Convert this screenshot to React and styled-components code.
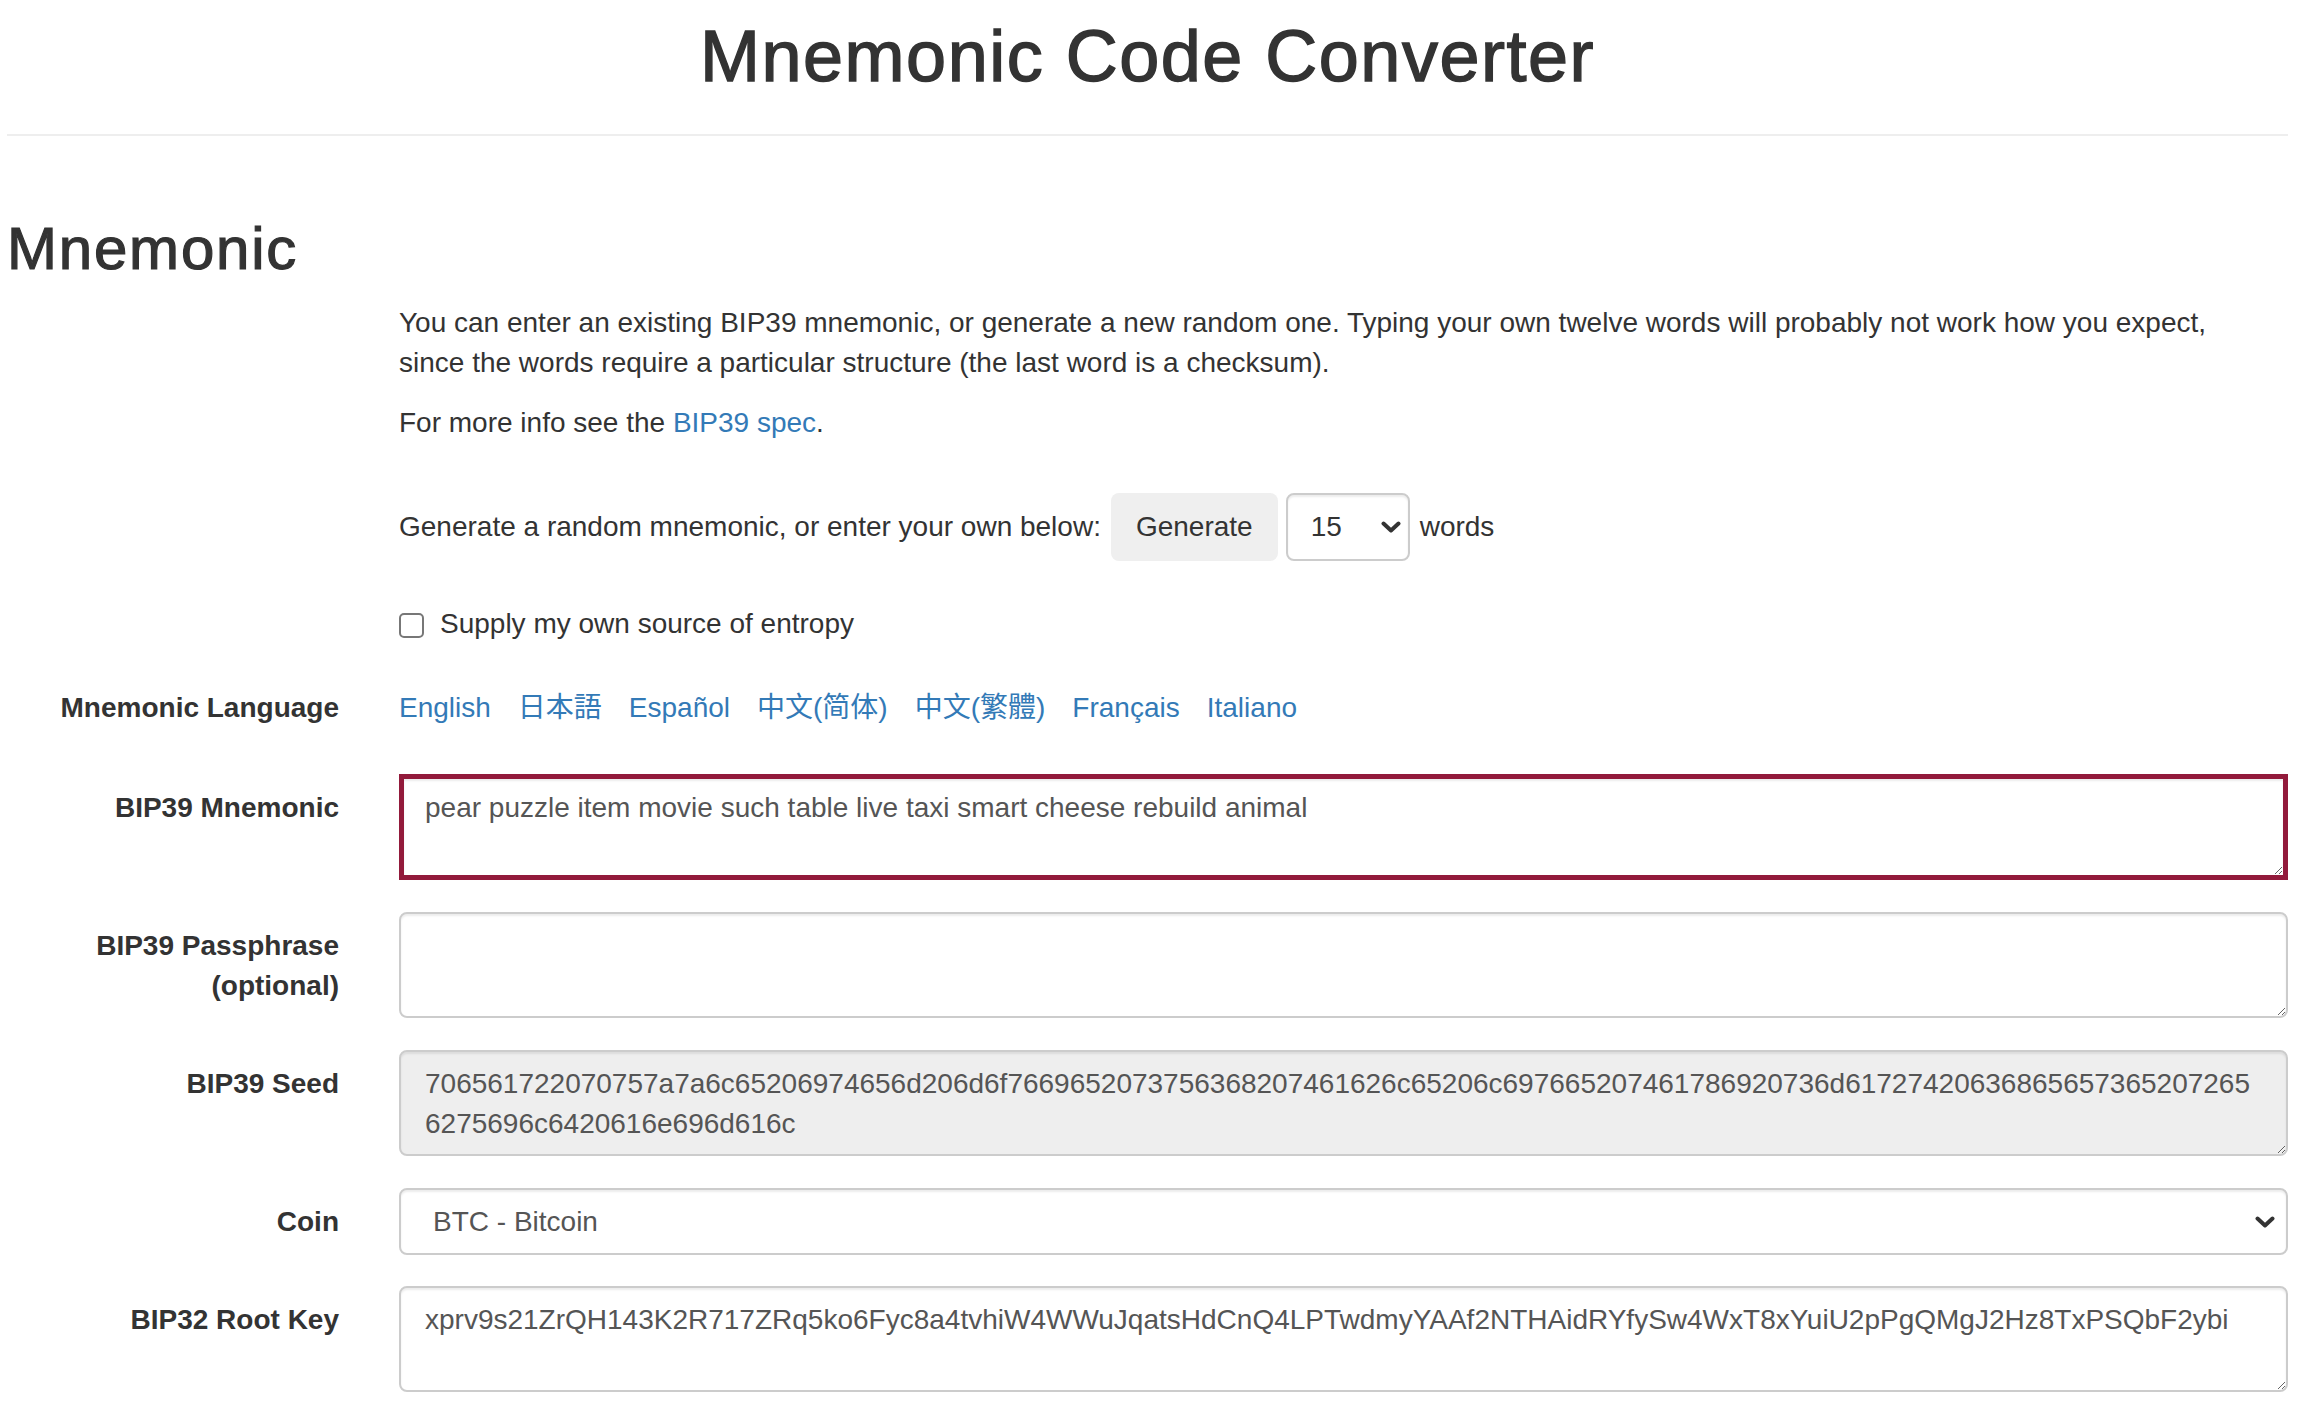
import React from 'react'
import styled, { createGlobalStyle } from 'styled-components'

const GlobalStyle = createGlobalStyle`
  * { box-sizing: border-box; }
  body {
    margin: 0;
    background: #fff;
    color: #333;
    font-family: "Liberation Sans", Helvetica, Arial, "Noto Sans CJK SC", sans-serif;
    font-size: 28px;
    line-height: 40px;
  }
`

const Page = styled.div`
  padding: 0 14px 0 8px;
`

const Header = styled.header`
  margin-left: -1px;
  padding: 17px 0 38px;
  border-bottom: 2px solid #eee;
`

const Title = styled.h1`
  margin: 0;
  text-align: center;
  font-size: 72px;
  line-height: 79px;
  font-weight: 400;
  letter-spacing: 1.5px;
  -webkit-text-stroke: 1.4px #333;
`

const SectionTitle = styled.h2`
  margin: 80px 0 21px -1px;
  font-size: 60px;
  line-height: 66px;
  font-weight: 400;
  letter-spacing: 1.8px;
  -webkit-text-stroke: 1.2px #333;
`

const Row = styled.div`
  display: grid;
  grid-template-columns: 331px 1fr;
  column-gap: 60px;
  margin-top: ${p => p.$top || 0}px;
  margin-bottom: ${p => (p.$bottom === undefined ? 32 : p.$bottom)}px;
`

const Label = styled.label`
  padding-top: 14px;
  text-align: right;
  font-weight: 700;
`

const Text = styled.p`
  margin: 0 0 20px;
  max-width: 1845px;
`

const Link = styled.a`
  color: #337ab7;
  text-decoration: none;
  font-family: "Liberation Sans", Helvetica, Arial, ${p => p.$cjk || '"Noto Sans CJK SC"'}, sans-serif;
`

const Inline = styled.div`
  display: flex;
  align-items: center;
  white-space: nowrap;
`

const Button = styled.button`
  height: 68px;
  margin-left: 10px;
  padding: 0 25px;
  border: none;
  border-radius: 8px;
  background: #efefef;
  color: #333;
  font: inherit;
`

const SelectWrap = styled.div`
  position: relative;
  margin-left: ${p => p.$left || 0}px;
  width: ${p => p.$width || '100%'};
`

const Select = styled.select`
  width: 100%;
  height: ${p => p.$height}px;
  padding: 0 0 0 ${p => p.$pad}px;
  border: 2px solid #ccc;
  border-radius: 8px;
  background: #fff;
  color: ${p => p.$color || '#555'};
  font: inherit;
  appearance: none;
  -webkit-appearance: none;
  box-shadow: inset 0 2px 2px rgba(0, 0, 0, 0.075);
`

const Chevron = styled.svg`
  position: absolute;
  top: 50%;
  right: ${p => p.$right}px;
  width: 20px;
  height: 12px;
  margin-top: -6px;
  pointer-events: none;
`

const Words = styled.span`
  margin-left: 10px;
`

const CheckRow = styled.label`
  display: flex;
  align-items: center;
`

const Check = styled.input`
  width: 25px;
  height: 25px;
  margin: 2px 16px 0 0;
  border: 2px solid #777;
  border-radius: 5px;
  background: #fff;
  appearance: none;
  -webkit-appearance: none;
`

const Languages = styled.div`
  display: flex;
  gap: 27px;
  padding-top: 14px;
`

const Area = styled.textarea`
  display: block;
  width: 100%;
  height: 106px;
  padding: ${p => (p.$invalid ? '9px 21px' : '12px 24px')};
  border: ${p => (p.$invalid ? '5px solid #921a3b' : '2px solid #ccc')};
  border-radius: ${p => (p.$invalid ? '0' : '8px')};
  background: ${p => (p.readOnly ? '#eee' : '#fff')};
  color: #555;
  font: inherit;
  resize: vertical;
  outline: none;
  box-shadow: inset 0 2px 2px rgba(0, 0, 0, 0.075);
`

function Arrow({ right }) {
  return (
    <Chevron $right={right} viewBox="0 0 20 12">
      <path d="M2.5 2.5 L10 9.5 L17.5 2.5" fill="none" stroke="#333" strokeWidth="4" strokeLinecap="round" strokeLinejoin="round" />
    </Chevron>
  )
}

const languages = [
  ['English'],
  ['日本語', '"Noto Sans CJK JP"'],
  ['Español'],
  ['中文(简体)', '"Noto Sans CJK SC"'],
  ['中文(繁體)', '"Noto Sans CJK TC"'],
  ['Français'],
  ['Italiano'],
]

const mnemonic = 'pear puzzle item movie such table live taxi smart cheese rebuild animal'
const seedHex = Array.from(mnemonic).map(c => c.charCodeAt(0).toString(16)).join('')
// the seed box breaks after 118 hex chars in the original
const seed = seedHex.slice(0, 118) + '\n' + seedHex.slice(118)
const rootKey = 'xprv9s21ZrQH143K2R717ZRq5ko6Fyc8a4tvhiW4WWuJqatsHdCnQ4LPTwdmyYAAf2NTHAidRYfySw4WxT8xYuiU2pPgQMgJ2Hz8TxPSQbF2ybi'

export default function App() {
  return (
    <>
      <GlobalStyle />
      <Page>
        <Header>
          <Title>Mnemonic Code Converter</Title>
        </Header>

        <SectionTitle>Mnemonic</SectionTitle>

        <Row $bottom={0}>
          <div />
          <div>
            <Text>
              You can enter an existing BIP39 mnemonic, or generate a new random one. Typing your own twelve words will probably not work how you expect, since the words require a particular structure (the last word is a checksum).
            </Text>
            <Text>
              For more info see the <Link href="#">BIP39 spec</Link>.
            </Text>
          </div>
        </Row>

        <Row $top={30} $bottom={43}>
          <div />
          <Inline>
            <span>Generate a random mnemonic, or enter your own below:</span>
            <Button type="button">Generate</Button>
            <SelectWrap $left={8} $width="124px">
              <Select $height={68} $pad={23} $color="#333" defaultValue="15">
                <option>3</option>
                <option>6</option>
                <option>9</option>
                <option>12</option>
                <option>15</option>
                <option>18</option>
                <option>21</option>
                <option>24</option>
              </Select>
              <Arrow right={9} />
            </SelectWrap>
            <Words>words</Words>
          </Inline>
        </Row>

        <Row $bottom={30}>
          <div />
          <CheckRow>
            <Check type="checkbox" />
            Supply my own source of entropy
          </CheckRow>
        </Row>

        <Row $bottom={46}>
          <Label>Mnemonic Language</Label>
          <Languages>
            {languages.map(([name, cjk]) => (
              <Link key={name} href="#" $cjk={cjk}>{name}</Link>
            ))}
          </Languages>
        </Row>

        <Row>
          <Label>BIP39 Mnemonic</Label>
          <Area $invalid defaultValue={mnemonic} />
        </Row>

        <Row>
          <Label>BIP39 Passphrase<br />(optional)</Label>
          <Area />
        </Row>

        <Row>
          <Label>BIP39 Seed</Label>
          <Area readOnly defaultValue={seed} />
        </Row>

        <Row $bottom={31}>
          <Label>Coin</Label>
          <SelectWrap>
            <Select $height={67} $pad={32} defaultValue="btc">
              <option value="btc">BTC - Bitcoin</option>
            </Select>
            <Arrow right={13} />
          </SelectWrap>
        </Row>

        <Row $bottom={0}>
          <Label>BIP32 Root Key</Label>
          <Area defaultValue={rootKey} />
        </Row>
      </Page>
    </>
  )
}
